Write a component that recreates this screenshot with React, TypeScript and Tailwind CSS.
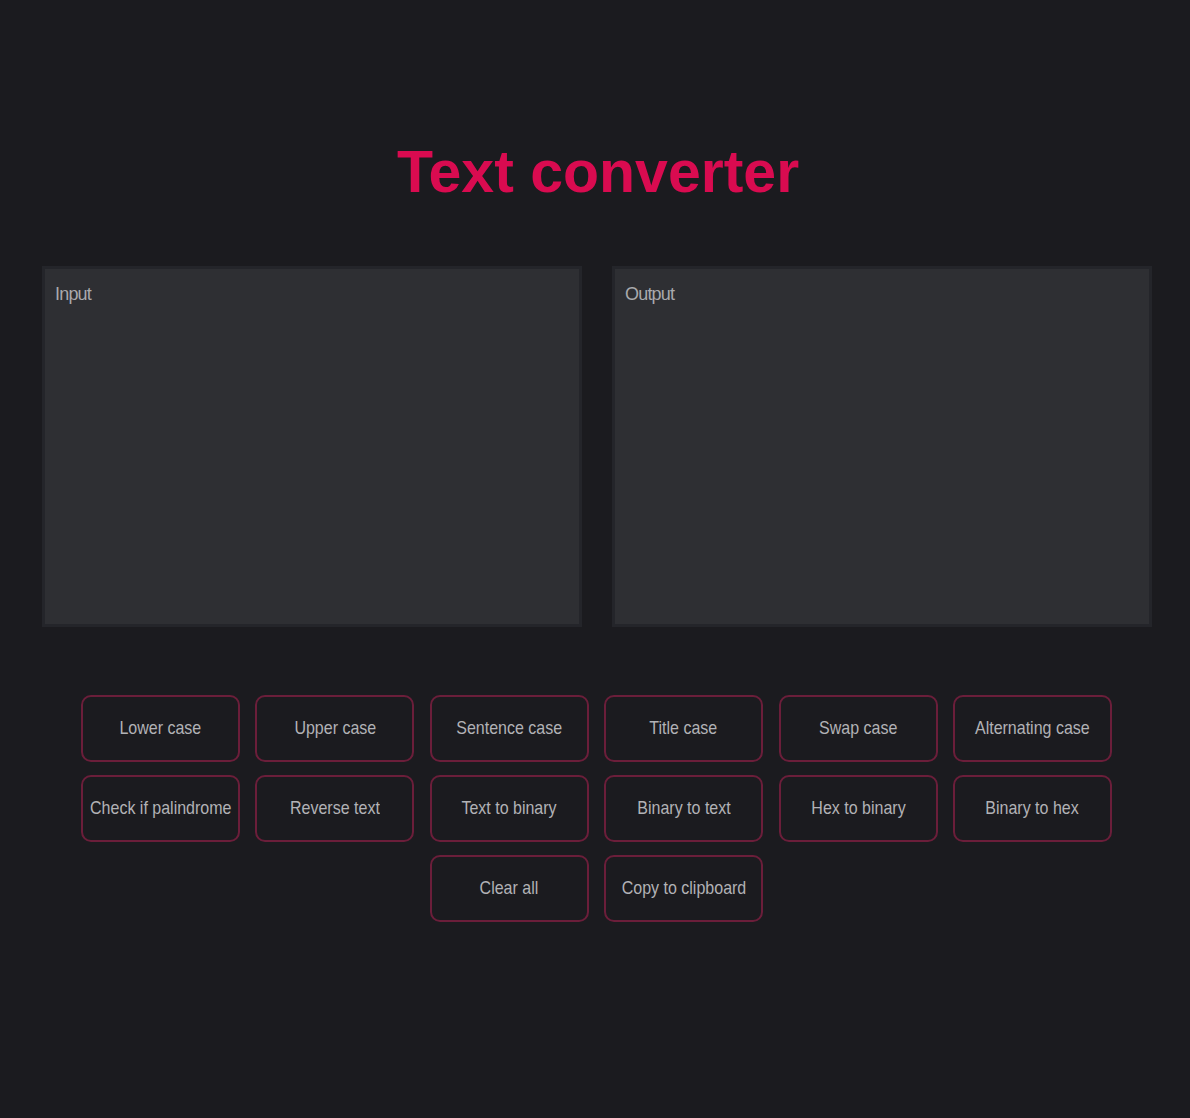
import React from "react";

const buttons = [
  "Lower case",
  "Upper case",
  "Sentence case",
  "Title case",
  "Swap case",
  "Alternating case",
  "Check if palindrome",
  "Reverse text",
  "Text to binary",
  "Binary to text",
  "Hex to binary",
  "Binary to hex",
  "Clear all",
  "Copy to clipboard",
];

function Panel({ label }: { label: string }) {
  return (
    <textarea
      placeholder={label}
      className="h-[361px] w-[540px] resize-none border-[3px] border-[#24252a] bg-[#2e2f33] px-[10px] py-[14px] font-['Liberation_Sans',Arial,sans-serif] text-[18px] leading-[22px] tracking-[-0.8px] text-[#b4b4b4] outline-none placeholder:text-[#a9a9ad]"
    />
  );
}

export default function App() {
  return (
    <div className="min-h-[1118px] w-full bg-[#1b1b1f] pt-[143px] font-['Liberation_Sans',Arial,sans-serif]">
      <h1 className="pl-[6px] text-center text-[59px] leading-[58px] font-bold text-[#d90b50]">Text converter</h1>
      <div className="mt-[65px] flex gap-[30px] pl-[42px]">
        <Panel label="Input" />
        <Panel label="Output" />
      </div>
      <div className="mx-auto mt-[68px] flex w-[1034px] flex-wrap justify-center gap-x-[15.4px] gap-y-[13px] pl-[3px]">
        {buttons.map((b) => (
          <button
            key={b}
            className="flex h-[67px] w-[159px] items-center justify-center rounded-[10px] border-2 border-[#6b1e3a] bg-[#1b1b1f] pb-[1px] text-[18.5px] text-[#b2b2b6]"
          >
            <span className="inline-block scale-x-[0.865] whitespace-nowrap">{b}</span>
          </button>
        ))}
      </div>
    </div>
  );
}
